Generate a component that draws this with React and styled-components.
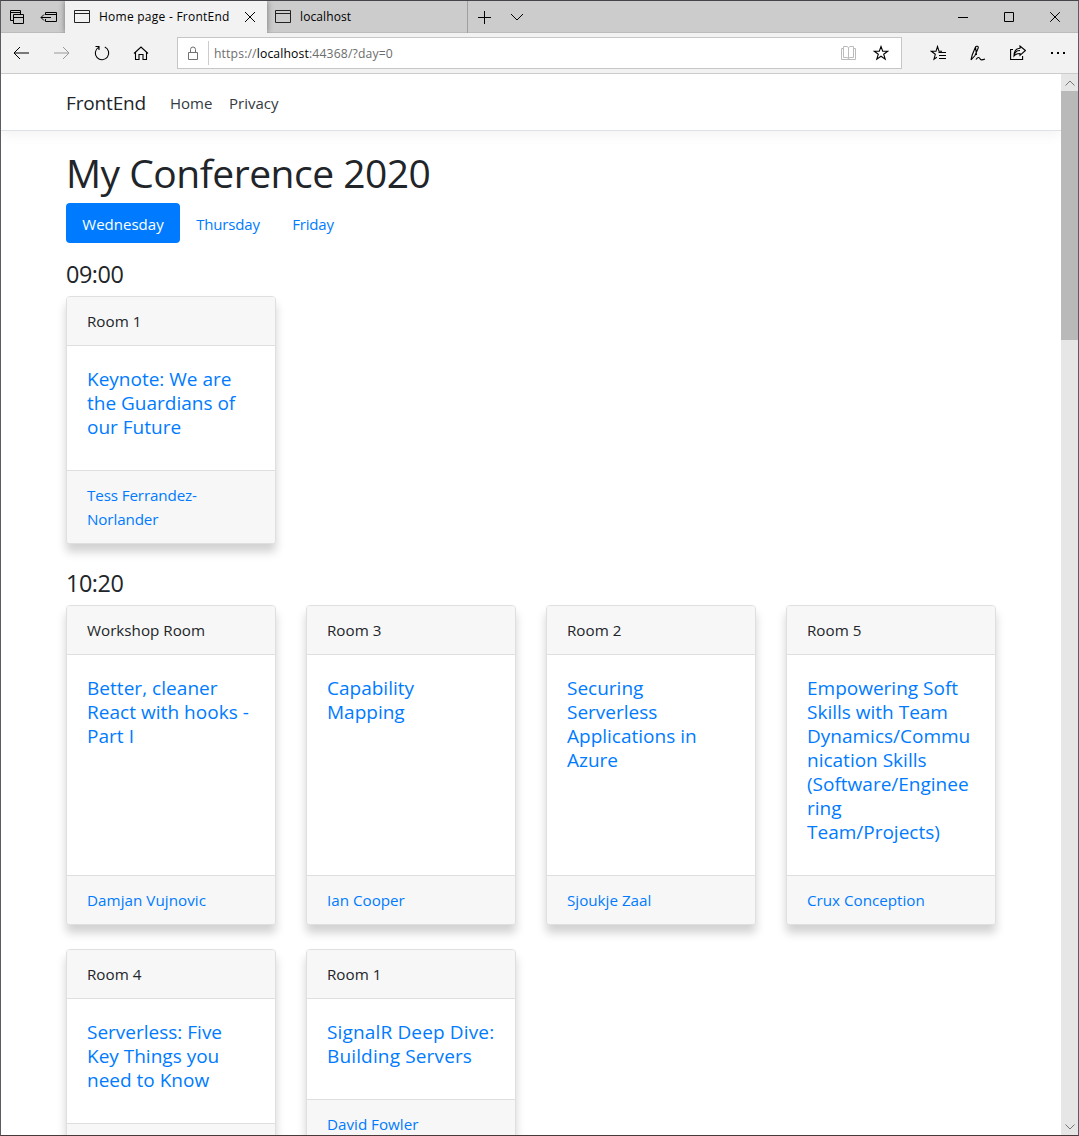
import React from "react";
import styled, { createGlobalStyle } from "styled-components";

const Global = createGlobalStyle`
  *, *::before, *::after { box-sizing: border-box; }
  body { margin: 0; overflow: hidden; }
`;

const Window = styled.div`
  width: 1079px;
  height: 1136px;
  display: flex;
  flex-direction: column;
  overflow: hidden;
  border: 1px solid #5d5a60;
  border-top-color: #47434a;
  border-bottom-color: #4a3a3c;
  background: #fff;
  color: #212529;
  font-family: "Open Sans", "Noto Sans", sans-serif;
`;

const TabStrip = styled.div`
  flex: none;
  height: 32px;
  display: flex;
  background: #ccc;
  box-shadow: inset 0 -1px 0 #bcbcbc;
`;

const Cell = styled.div`
  flex: none;
  width: ${(p) => p.$w}px;
  display: flex;
  align-items: center;
  justify-content: center;
`;

const Tab = styled.div`
  flex: none;
  width: ${(p) => p.$w}px;
  padding: 0 11px 0 ${(p) => (p.$active ? 9 : 8)}px;
  display: flex;
  align-items: center;
  font-size: 12px;
  letter-spacing: ${(p) => (p.$active ? 0.25 : 0.1)}px;
  color: #000;
  background: ${(p) => (p.$active ? "#f2f2f2" : "transparent")};
  border-right: ${(p) => (p.$active ? "none" : "1px solid #a0a0a0")};
  box-shadow: ${(p) => (p.$active ? "0 0 6px rgba(0,0,0,.45)" : "none")};
  clip-path: ${(p) => (p.$active ? "inset(0 -8px 0 -8px)" : "none")};
`;

const TabTitle = styled.span`
  flex: 1;
  margin-left: 9px;
  line-height: 16px;
  white-space: nowrap;
`;

const Spacer = styled.div`
  flex: 1;
`;

const Toolbar = styled.div`
  flex: none;
  height: 41px;
  display: flex;
  background: #f2f2f2;
  border-bottom: 1px solid #ccc;
`;

const AddressBar = styled.div`
  flex: none;
  width: 725px;
  height: 32px;
  margin: 4px 16px 0 16px;
  display: flex;
  align-items: center;
  background: #fff;
  border: 1px solid #c6c6c6;
`;

const Url = styled.div`
  flex: 1;
  height: 24px;
  padding-left: 5px;
  border-left: 1px solid #ccc;
  font-size: 12.2px;
  line-height: 25px;
  letter-spacing: 0.14px;
  color: #6d6d6d;
  b { font-weight: 400; color: #000; }
`;

const Viewport = styled.div`
  flex: 1;
  min-height: 0;
  display: flex;
`;

const Page = styled.div`
  flex: 1;
  overflow: hidden;
`;

const Scrollbar = styled.div`
  flex: none;
  width: 17px;
  display: flex;
  flex-direction: column;
  background: #e6e6e6;
`;

const ScrollButton = styled.div`
  height: 17px;
  display: flex;
  align-items: center;
  justify-content: center;
`;

const Thumb = styled.div`
  height: 249px;
  background: #b9b9b9;
`;

const Navbar = styled.nav`
  height: 57px;
  padding: 2px 65px 0;
  display: flex;
  align-items: center;
  border-bottom: 1px solid #dee2e6;
  box-shadow: 0 4px 12px rgba(0, 0, 0, 0.05);
`;

const Brand = styled.a`
  width: 80px;
  margin-right: 24px;
  font-size: 19px;
  letter-spacing: -0.16px;
  line-height: 30px;
`;

const NavLink = styled.a`
  margin-right: 16px;
  width: ${(p) => p.$w}px;
  white-space: nowrap;
  font-size: 15px;
  letter-spacing: 0.02px;
  line-height: 24px;
  color: #343a40;
`;

const Content = styled.main`
  padding: 16px 65px 0;
`;

const Title = styled.h1`
  margin: 0 0 4px;
  font-size: 39px;
  font-weight: 400;
  line-height: 52px;
  letter-spacing: -0.5px;
  white-space: nowrap;
`;

const Pills = styled.div`
  display: flex;
  margin-bottom: 16px;
`;

const Pill = styled.a`
  width: ${(p) => p.$w}px;
  height: 40px;
  padding-top: 2px;
  text-align: center;
  font-size: 15px;
  letter-spacing: ${(p) => (p.$active ? 0.02 : -0.17)}px;
  line-height: 38px;
  border-radius: 4px;
  color: ${(p) => (p.$active ? "#fff" : "#007bff")};
  background: ${(p) => (p.$active ? "#007bff" : "transparent")};
`;

const Time = styled.h4`
  margin: 0 0 7px;
  padding-top: 1px;
  font-size: 23.4px;
  font-weight: 400;
  line-height: 29px;
  letter-spacing: -0.45px;
`;

const Row = styled.div`
  display: grid;
  grid-template-columns: repeat(4, 210px);
  gap: 24px 30px;
  margin-bottom: 24px;
`;

const Card = styled.article`
  display: flex;
  flex-direction: column;
  border: 1px solid #dfdfdf;
  border-radius: 4px;
  background: #fff;
  box-shadow: 0 8px 10px rgba(0, 0, 0, 0.18);
  overflow: hidden;
`;

const Room = styled.header`
  height: 49px;
  padding: 12px 20px;
  font-size: 15.2px;
  letter-spacing: 0;
  line-height: 25px;
  background: #f7f7f7;
  border-bottom: 1px solid #dfdfdf;
`;

const Talk = styled.h5`
  flex: 1;
  margin: 0;
  padding: 21px 0 31px 20px;
  font-size: 19px;
  font-weight: 400;
  letter-spacing: ${(p) => p.$ls || 0}px;
  line-height: 24px;
  white-space: pre;
  color: #007bff;
`;

const Speaker = styled.footer`
  min-height: ${(p) => (p.$tall ? 73 : 49)}px;
  padding: 12px 20px 12px;
  font-size: 15.2px;
  letter-spacing: ${(p) => p.$ls || 0}px;
  line-height: 24px;
  white-space: pre;
  color: #007bff;
  background: #f7f7f7;
  border-top: 1px solid #dfdfdf;
`;

const Svg = ({ w, h, c = "#000", sw = 1, children }) => (
  <svg width={w} height={h} viewBox={`0 0 ${w} ${h}`} fill="none" stroke={c} strokeWidth={sw}>
    {children}
  </svg>
);

const PageIcon = () => (
  <Svg w={16} h={14} c="#222"><path d="M.5 .5h15v12h-15zM.5 3.5h15" /></Svg>
);

const schedule = [
  {
    time: "09:00",
    talks: [{ room: "Room 1", title: "Keynote: We are\nthe Guardians of\nour Future", by: "Tess Ferrandez-\nNorlander", byLs: -0.12 }],
  },
  {
    time: "10:20",
    talks: [
      { room: "Workshop Room", title: "Better, cleaner\nReact with hooks -\nPart I", by: "Damjan Vujnovic", ls: 0.04, byLs: 0.04 },
      { room: "Room 3", title: "Capability\nMapping", by: "Ian Cooper" },
      { room: "Room 2", title: "Securing\nServerless\nApplications in\nAzure", by: "Sjoukje Zaal" },
      {
        room: "Room 5",
        title: "Empowering Soft\nSkills with Team\nDynamics/Commu\nnication Skills\n(Software/Enginee\nring\nTeam/Projects)",
        by: "Crux Conception",
      },
      { room: "Room 4", title: "Serverless: Five\nKey Things you\nneed to Know", by: "" },
      { room: "Room 1", title: "SignalR Deep Dive:\nBuilding Servers", by: "David Fowler", ls: 0.15, tall: true },
    ],
  },
];

export default function App() {
  return (
    <Window>
      <Global />
      <TabStrip>
        <Cell $w={32}>
          <Svg w={16} h={16}><path d="M4.500 5.500h10v9h-10zM4.500 8.500h10M4.500 11.500h-3v-10h10v4M1.500 3.500h10" /></Svg>
        </Cell>
        <Cell $w={32}>
          <Svg w={18} h={12}><path d="M5.500 4V1.500h11v9h-11V8M5.500 3.500h11M1 6.500h10M4 3.500l-3 3 3 3" /></Svg>
        </Cell>
        <Tab $w={202} $active>
          <PageIcon />
          <TabTitle>Home page - FrontEnd</TabTitle>
          <Svg w={12} h={12}><path d="M1 1l10 10M11 1L1 11" /></Svg>
        </Tab>
        <Tab $w={201}>
          <PageIcon />
          <TabTitle>localhost</TabTitle>
        </Tab>
        <Cell $w={32}><Svg w={14} h={14}><path d="M7.500 1v13M1 7.500h13" /></Svg></Cell>
        <Cell $w={33}><Svg w={14} h={8}><path d="M1 1l6 6 6-6" /></Svg></Cell>
        <Spacer />
        <Cell $w={46}><Svg w={10} h={10}><path d="M0 5.500h10" /></Svg></Cell>
        <Cell $w={46}><Svg w={10} h={10}><path d="M.5 .5h9v9h-9z" /></Svg></Cell>
        <Cell $w={46}><Svg w={10} h={10}><path d="M.2 .2l9.600 9.600M9.800 .2L.2 9.800" /></Svg></Cell>
      </TabStrip>
      <Toolbar>
        <Cell $w={40}><Svg w={16} h={14}><path d="M1 7h15M7 1L1 7l6 6" /></Svg></Cell>
        <Cell $w={41}><Svg w={16} h={14} c="#999"><path d="M0 7h15M9 1l6 6-6 6" /></Svg></Cell>
        <Cell $w={39}><Svg w={16} h={16} sw={1.100}><path d="M10.800 2a6.700 6.700 0 1 1-6.300 .4M1.500 1.500H5v3.500" /></Svg></Cell>
        <Cell $w={40}><Svg w={16} h={16} sw={1.100}><path d="M1 8.500l7-6.500L15 8.500M2.500 7.500v7h3.500V9.500h4v5h3.500v-7" /></Svg></Cell>
        <AddressBar>
          <Cell $w={30}><Svg w={12} h={14} c="#707070"><path d="M1.500 6.500h9v7h-9zM3.500 6.500V3.500a2.500 2.500 0 0 1 5 0v3" /></Svg></Cell>
          <Url>https://<b>localhost</b>:44368/?day=0</Url>
          <Cell $w={25}><Svg w={15} h={14} c="#bbb"><path d="M2.500 .5h3.500l1.500 1 1.500-1h3.500v11H9l-1.500 1-1.500-1h-3.500zM7.500 1.500v11M2.500 2.500h-2v11h14v-11h-2" /></Svg></Cell>
          <Cell $w={40}><Svg w={16} h={16} sw={1.100}><path d="M8 1.500l1.700 4.700h5l-4 3 1.500 4.900L8 11.200l-4.200 2.900 1.500-4.900-4-3h5z" /></Svg></Cell>
        </AddressBar>
        <Cell $w={40}><Svg w={16} h={16} sw={1.100}><path d="M6.800 12.200L4 14.200l1.300-4.900-4-3h4.700L7.500 1.500 9 6.300h3M8.500 7.500H16M9 10.500h7M9 13.500h7" /></Svg></Cell>
        <Cell $w={40}><Svg w={16} h={16} sw={1.100}><path d="M1 15l1.200-5L5.500 2C6.200 .6 8.800 1.200 8.200 3L5 10.500 1 15M5.500 2l1 8M6 14.500c2-3 3.500-2 4-.7s2 1.400 5 .2" /></Svg></Cell>
        <Cell $w={40}><Svg w={16} h={16} sw={1.100}><path d="M3 4.500H.6v10h12V11M4 11c.5-4 3-5.500 6-5.500M4 11c1.500-2 3.500-2.500 6-2.500v1.800l5.400-4.800L10 1v2.300C6 3.500 4 6.500 4 11z" /></Svg></Cell>
        <Cell $w={40}><Svg w={16} h={4} sw={2}><path d="M1 2h2M7 2h2M13 2h2" /></Svg></Cell>
      </Toolbar>
      <Viewport>
        <Page>
          <Navbar>
            <Brand>FrontEnd</Brand>
            <NavLink $w={43}>Home</NavLink>
            <NavLink $w={50}>Privacy</NavLink>
          </Navbar>
          <Content>
            <Title>My Conference 2020</Title>
            <Pills>
              <Pill $w={114} $active>Wednesday</Pill>
              <Pill $w={96}>Thursday</Pill>
              <Pill $w={74}>Friday</Pill>
            </Pills>
            {schedule.map((slot) => (
              <section key={slot.time}>
                <Time>{slot.time}</Time>
                <Row>
                  {slot.talks.map((t) => (
                    <Card key={t.title}>
                      <Room>{t.room}</Room>
                      <Talk $ls={t.ls}>{t.title}</Talk>
                      <Speaker $tall={t.tall} $ls={t.byLs}>{t.by}</Speaker>
                    </Card>
                  ))}
                </Row>
              </section>
            ))}
          </Content>
        </Page>
        <Scrollbar>
          <ScrollButton><Svg w={10} h={6} c="#777"><path d="M.5 5.500L5 1l4.500 4.500" /></Svg></ScrollButton>
          <Thumb />
          <Spacer />
          <ScrollButton><Svg w={10} h={6} c="#777"><path d="M.5 .5L5 5l4.500-4.500" /></Svg></ScrollButton>
        </Scrollbar>
      </Viewport>
    </Window>
  );
}
